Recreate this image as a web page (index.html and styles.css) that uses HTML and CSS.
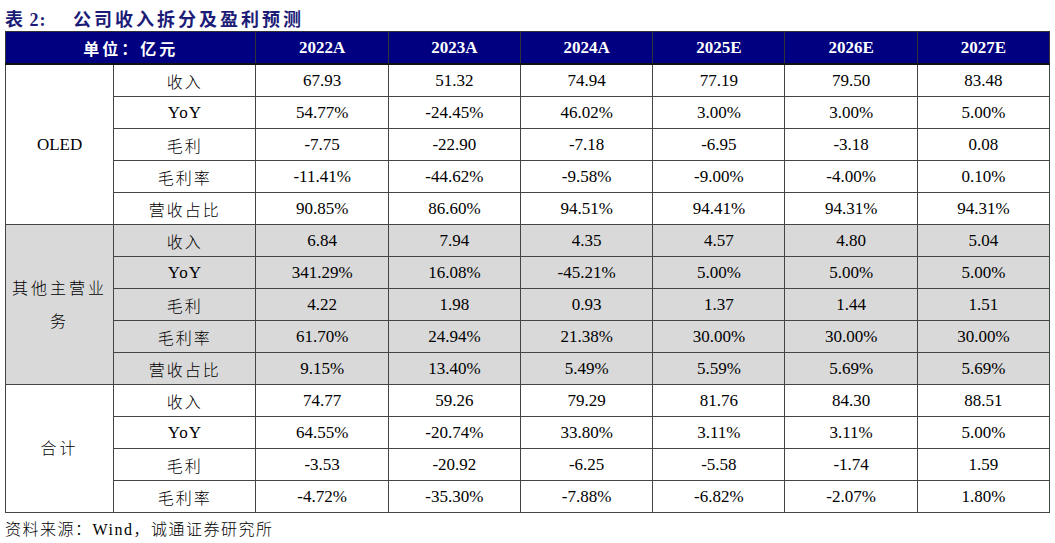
FILE: index.html
```html
<!DOCTYPE html>
<html lang="zh">
<head>
<meta charset="utf-8">
<link rel="stylesheet" href="styles.css">
</head>
<body>
<div class="page">
  <div class="title"><span class="tno">表 2:</span><span class="tname">公司收入拆分及盈利预测</span></div>
  <table class="tbl">
    <colgroup>
      <col class="c-group"><col class="c-metric">
      <col class="c-val"><col class="c-val"><col class="c-val"><col class="c-val"><col class="c-val"><col class="c-val">
    </colgroup>
    <thead>
      <tr>
        <th colspan="2" class="unit">单位：亿元</th>
        <th>2022A</th><th>2023A</th><th>2024A</th><th>2025E</th><th>2026E</th><th>2027E</th>
      </tr>
    </thead>
    <tbody class="sec">
      <tr><td rowspan="5" class="grp en">OLED</td><td class="m">收入</td><td>67.93</td><td>51.32</td><td>74.94</td><td>77.19</td><td>79.50</td><td>83.48</td></tr>
      <tr><td class="m en">YoY</td><td>54.77%</td><td>-24.45%</td><td>46.02%</td><td>3.00%</td><td>3.00%</td><td>5.00%</td></tr>
      <tr><td class="m">毛利</td><td>-7.75</td><td>-22.90</td><td>-7.18</td><td>-6.95</td><td>-3.18</td><td>0.08</td></tr>
      <tr><td class="m">毛利率</td><td>-11.41%</td><td>-44.62%</td><td>-9.58%</td><td>-9.00%</td><td>-4.00%</td><td>0.10%</td></tr>
      <tr><td class="m">营收占比</td><td>90.85%</td><td>86.60%</td><td>94.51%</td><td>94.41%</td><td>94.31%</td><td>94.31%</td></tr>
    </tbody>
    <tbody class="sec gray">
      <tr><td rowspan="5" class="grp"><span class="wrap">其他主营业务</span></td><td class="m">收入</td><td>6.84</td><td>7.94</td><td>4.35</td><td>4.57</td><td>4.80</td><td>5.04</td></tr>
      <tr><td class="m en">YoY</td><td>341.29%</td><td>16.08%</td><td>-45.21%</td><td>5.00%</td><td>5.00%</td><td>5.00%</td></tr>
      <tr><td class="m">毛利</td><td>4.22</td><td>1.98</td><td>0.93</td><td>1.37</td><td>1.44</td><td>1.51</td></tr>
      <tr><td class="m">毛利率</td><td>61.70%</td><td>24.94%</td><td>21.38%</td><td>30.00%</td><td>30.00%</td><td>30.00%</td></tr>
      <tr><td class="m">营收占比</td><td>9.15%</td><td>13.40%</td><td>5.49%</td><td>5.59%</td><td>5.69%</td><td>5.69%</td></tr>
    </tbody>
    <tbody class="sec">
      <tr><td rowspan="4" class="grp">合计</td><td class="m">收入</td><td>74.77</td><td>59.26</td><td>79.29</td><td>81.76</td><td>84.30</td><td>88.51</td></tr>
      <tr><td class="m en">YoY</td><td>64.55%</td><td>-20.74%</td><td>33.80%</td><td>3.11%</td><td>3.11%</td><td>5.00%</td></tr>
      <tr><td class="m">毛利</td><td>-3.53</td><td>-20.92</td><td>-6.25</td><td>-5.58</td><td>-1.74</td><td>1.59</td></tr>
      <tr><td class="m">毛利率</td><td>-4.72%</td><td>-35.30%</td><td>-7.88%</td><td>-6.82%</td><td>-2.07%</td><td>1.80%</td></tr>
    </tbody>
  </table>
  <div class="source">资料来源：Wind，诚通证券研究所</div>
</div>
</body>
</html>
```

FILE: styles.css
```css
html, body {
  margin: 0;
  padding: 0;
  background: #ffffff;
}
.page {
  width: 1045px;
  padding: 4px 0 0 5px;
  font-family: "Liberation Serif", "Noto Sans CJK SC", serif;
  color: #000;
}
.title {
  height: 27px;
  display: flex;
  align-items: center;
  color: #1c1c78;
  font-weight: bold;
  font-size: 18px;
  letter-spacing: 1px;
}
.tno {
  width: 68px;
}
.tname {
  letter-spacing: 3px;
}
.tbl {
  border-collapse: collapse;
  table-layout: fixed;
  width: 1045px;
  font-size: 17px;
}
.c-group { width: 108px; }
.c-metric { width: 142px; }
.c-val { width: 132px; }
.tbl th {
  background: #000080;
  color: #fff;
  font-weight: bold;
  height: 31px;
  padding: 0;
  text-align: center;
  border: 1px solid #333;
  border-bottom: 2px solid #111;
}
.tbl th.unit {
  font-size: 16px;
  letter-spacing: 3px;
}
.tbl td {
  height: 31px;
  padding: 0;
  text-align: center;
  border: 1px solid #444;
}
.tbl td.m {
  font-size: 16px;
  letter-spacing: 2px;
  font-weight: 300;
}
.tbl td.m.en {
  font-size: 17px;
  letter-spacing: 1px;
  font-weight: normal;
}
.tbl td.grp {
  font-size: 16px;
  letter-spacing: 3px;
  line-height: 33px;
  font-weight: 300;
}
.tbl td.grp.en {
  font-size: 17px;
  letter-spacing: 0;
  font-weight: normal;
}
.wrap {
  display: block;
  padding: 0 6px;
}
.gray td {
  background: #d9d9d9;
}
.source {
  margin-top: 3px;
  font-size: 16px;
  letter-spacing: 1.5px;
  font-weight: 300;
}
```
